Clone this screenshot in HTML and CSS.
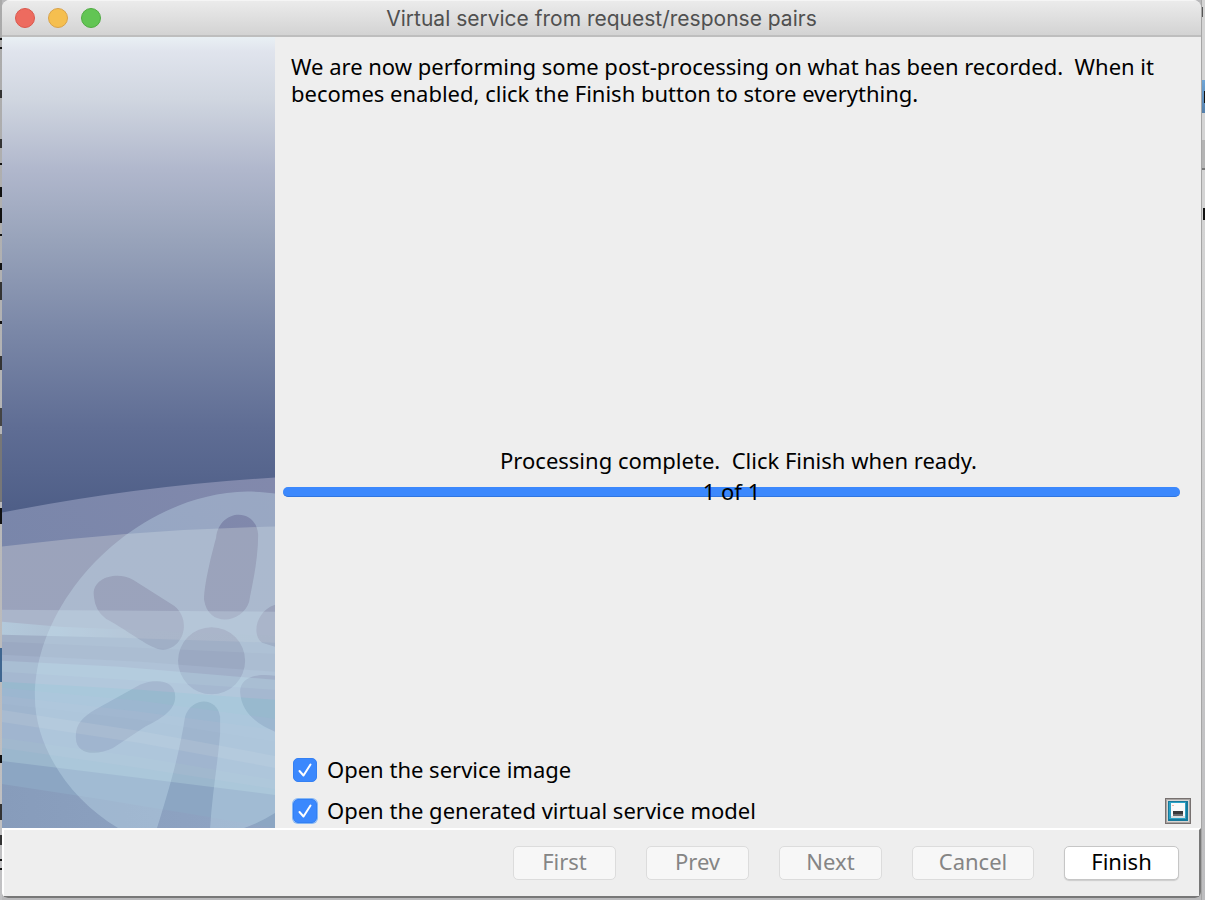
FILE: index.html
```html
<!DOCTYPE html>
<html lang="en">
<head>
    <meta charset="UTF-8">
    <meta name="viewport" content="width=device-width, initial-scale=1.0">
    <title>Virtual service from request/response pairs</title>
    <link rel="stylesheet" href="styles.css">
</head>
<body>
    <div class="edge-left"></div>

    <div class="window">
        <header class="titlebar">
            <div class="lights">
                <button class="light close" aria-label="Close"></button>
                <button class="light minimize" aria-label="Minimize"></button>
                <button class="light maximize" aria-label="Zoom"></button>
            </div>
            <h1>Virtual service from request/response pairs</h1>
        </header>

        <div class="content">
            <!-- Wizard artwork -->
            <aside class="artwork">
                <svg viewBox="2 38 273 790" preserveAspectRatio="xMidYMax slice" aria-hidden="true">
                    <defs>
                        <linearGradient id="sky" gradientUnits="userSpaceOnUse" x1="0" y1="38" x2="0" y2="514">
                            <stop offset="0" stop-color="#e9f0f4"/>
                            <stop offset="0.03" stop-color="#e0e4ed"/>
                            <stop offset="0.13" stop-color="#d0d6e0"/>
                            <stop offset="0.28" stop-color="#b0b7cc"/>
                            <stop offset="0.42" stop-color="#99a4bb"/>
                            <stop offset="0.62" stop-color="#7a87a7"/>
                            <stop offset="0.82" stop-color="#5f6d94"/>
                            <stop offset="1" stop-color="#4e5e87"/>
                        </linearGradient>
                        <linearGradient id="hill" x1="0" y1="1" x2="1" y2="0">
                            <stop offset="0" stop-color="#7384a9"/>
                            <stop offset="1" stop-color="#8289ac"/>
                        </linearGradient>
                        <linearGradient id="field" x1="0" y1="0" x2="0" y2="1">
                            <stop offset="0" stop-color="#9ba3bb"/>
                            <stop offset="1" stop-color="#9aa3be"/>
                        </linearGradient>
                        <linearGradient id="glow" x1="0" y1="0" x2="1" y2="0">
                            <stop offset="0" stop-color="#b3c9db"/>
                            <stop offset="0.5" stop-color="#aab6ca"/>
                            <stop offset="1" stop-color="#a9b5c9"/>
                        </linearGradient>
                        <linearGradient id="deep" x1="0" y1="0" x2="1" y2="0">
                            <stop offset="0" stop-color="#879cbb"/>
                            <stop offset="1" stop-color="#90a5c4"/>
                        </linearGradient>
                    </defs>
                    <rect x="2" y="38" width="273" height="790" fill="url(#sky)"/>
                    <path fill="url(#hill)" d="M2 513Q140 486 275 478V828H2Z"/>
                    <path fill="url(#field)" d="M2 547Q140 530 275 527V828H2Z"/>

                    <!-- Light streaks -->
                    <path fill="#aab5ca" d="M2 610L275 612V828H2Z"/>
                    <path fill="url(#glow)" d="M2 622L60 627L275 636V828H2Z"/>
                    <path fill="#a0afc6" d="M2 635L120 638L275 643V828H2Z"/>
                    <path fill="#9ba9c2" d="M2 642L140 648L275 654V828H2Z"/>
                    <path fill="#a1b0c9" d="M2 655L140 662L275 672V828H2Z"/>
                    <path fill="#a9bed3" d="M2 661L120 667L275 680V828H2Z"/>
                    <path fill="#a5b8d0" d="M2 672L140 681L275 690V828H2Z"/>
                    <path fill="#98b9ce" d="M2 682L140 690L275 700V828H2Z"/>
                    <path fill="#9cb7d0" d="M2 688L140 701L275 719V828H2Z"/>
                    <path fill="#a1b7d0" d="M2 696L140 712L275 730V828H2Z"/>
                    <path fill="#9fb5ce" d="M2 704L140 720L275 742V828H2Z"/>
                    <path fill="#a8bbd1" d="M2 710L140 731L275 756V828H2Z"/>
                    <path fill="#a0b5cf" d="M2 722L140 743L275 768V828H2Z"/>
                    <path fill="#a1b8ce" d="M2 738L140 757L275 780V828H2Z"/>
                    <path fill="#9bb7cd" d="M2 748L140 768L275 789V828H2Z"/>
                    <path fill="#8ca6c3" d="M2 761L140 778L275 795V828H2Z"/>
                    <path fill="url(#deep)" d="M2 784L100 799L275 828H2Z"/>

                    <!-- Translucent disc with cut-out petals -->
                    <path fill="#cceaf5" fill-opacity="0.32" fill-rule="evenodd" d="M118 828C68 798 35 746 35 697C35 597 137 494 247 492C257 492 267 493 275 494V813Q261 822 244 828H210
                        C212 795 218 760 220 733V717C217 696 191 697 185 717C180 750 172 780 157 828Z
                        M216 538C219 509 256 507 258 535C258 560 252 586 249 602C242 624 208 628 204 600C204 585 211 556 216 538Z
                        M94 597C91 578 117 571 133 580L174 606C191 619 185 648 163 650C151 650 130 632 106 619Q95 611 94 597Z
                        M245 661A33 33 0 1 1 178 661A33 33 0 1 1 245 661Z
                        M76 738C75 725 83 717 95 710L140 685C157 677 177 681 175 699C174 711 161 719 145 727L113 748C97 756 76 755 76 738Z
                        M275 605C256 611 251 635 262 643L275 647Z
                        M275 676C257 673 240 677 240 692C241 713 257 724 275 732Z"/>
                </svg>
            </aside>

            <main class="panel">
                <p class="intro">We are now performing some post-processing on what has been recorded.&nbsp; When it becomes enabled, click the Finish button to store everything.</p>

                <div class="status">
                    <label for="progress">Processing complete.&nbsp; Click Finish when ready.</label>
                    <div class="progress-wrap">
                        <progress id="progress" value="1" max="1"></progress>
                        <span class="progress-text">1 of 1</span>
                    </div>
                </div>

                <div class="options">
                    <div class="checks">
                        <label class="check">
                            <span class="box">
                                <input type="checkbox" checked>
                                <svg viewBox="0 0 24 24" aria-hidden="true"><path d="M6.500 13L10.500 17.500L17.500 6.500"/></svg>
                            </span>
                            Open the service image
                        </label>
                        <label class="check">
                            <span class="box focused">
                                <input type="checkbox" checked>
                                <svg viewBox="0 0 24 24" aria-hidden="true"><path d="M6.500 13L10.500 17.500L17.500 6.500"/></svg>
                            </span>
                            Open the generated virtual service model
                        </label>
                    </div>
                    <button class="save" aria-label="Save">
                        <svg viewBox="0 0 26 26" aria-hidden="true">
                            <rect x="0.500" y="0.500" width="25" height="25" fill="#d8d5d3" stroke="#777170"/>
                            <rect x="1.500" y="1.500" width="23" height="23" fill="none" stroke="#aaa5a3"/>
                            <rect x="3" y="3" width="20" height="20" fill="#16799b"/>
                            <rect x="4" y="4" width="17" height="17" fill="#2ba1c5"/>
                            <rect x="6" y="5" width="14" height="15" fill="#f8fafa"/>
                            <path fill="#d9dfe1" d="M6 18H20V20H6Z"/>
                            <path fill="#39393b" d="M8 13H18V18H8Z"/>
                            <path fill="#69696c" d="M8 16H18V18H8Z"/>
                            <path fill="#f0b8a8" d="M7 7H9V8H7Z"/>
                        </svg>
                    </button>
                </div>
            </main>
        </div>

        <footer class="actions">
            <button disabled>First</button>
            <button disabled>Prev</button>
            <button disabled>Next</button>
            <button class="wide" disabled>Cancel</button>
            <button class="finish">Finish</button>
        </footer>
    </div>

    <div class="edge-right"></div>
</body>
</html>
```
FILE: styles.css
```css
* {
    box-sizing: border-box;
}

body {
    display: grid;
    grid-template-columns: 2px 1fr 4px;
    min-height: 100vh;
    margin: 0;
    background-color: #b9b9bb;
    color: #000;
    font-family: "Noto Sans", "Open Sans", sans-serif;
    font-size: 22px;
    line-height: 27px;
}

button,
input {
    margin: 0;
    font: inherit;
}

/* Slivers of the windows behind */
.edge-left {
    background:
        linear-gradient(#111, #111) 0 38px / 2px 2px,
        linear-gradient(#111, #111) 0 47px / 2px 2px,
        linear-gradient(#333, #333) 0 90px / 2px 8px,
        linear-gradient(#333, #333) 0 139px / 2px 9px,
        linear-gradient(#111, #111) 0 163px / 2px 2px,
        linear-gradient(#111, #111) 0 187px / 2px 10px,
        linear-gradient(#111, #111) 0 208px / 2px 15px,
        linear-gradient(#111, #111) 0 234px / 2px 2px,
        linear-gradient(#111, #111) 0 263px / 2px 7px,
        linear-gradient(#333, #333) 0 282px / 2px 18px,
        linear-gradient(#111, #111) 0 321px / 2px 3px,
        linear-gradient(#333, #333) 0 356px / 2px 14px,
        linear-gradient(#444, #444) 0 408px / 2px 18px,
        linear-gradient(#777, #777) 0 434px / 2px 68px,
        linear-gradient(#111, #111) 0 508px / 2px 16px,
        linear-gradient(#3f6690, #3f6690) 0 648px / 2px 34px,
        linear-gradient(#111, #111) 0 755px / 2px 8px,
        linear-gradient(#333, #333) 0 804px / 2px 16px,
        linear-gradient(#333, #333) 0 835px / 2px 10px,
        linear-gradient(#111, #111) 0 859px / 2px 2px,
        linear-gradient(#111, #111) 0 868px / 2px 2px,
        linear-gradient(#aaa, #c2c2c4);
    background-repeat: no-repeat;
}

.edge-right {
    border-left: 1px solid #a5a5a5;
    background:
        linear-gradient(#555, #555) 0 7px / 1px 10px,
        linear-gradient(#111, #111) 2px 91px / 1px 12px,
        linear-gradient(#6fa5d6, #5580ab) 0 80px / 3px 33px,
        linear-gradient(#b4b4b4, #b4b4b4) 0 140px / 3px 28px,
        linear-gradient(#777, #777) 0 168px / 3px 2px,
        linear-gradient(#111, #111) 1px 208px / 2px 12px,
        linear-gradient(#d4d4d4 0, #d4d4d4 224px, #bdbdbf 100%);
    background-repeat: no-repeat;
}

.window {
    display: flex;
    flex-direction: column;
    min-width: 0;
    margin-bottom: 2px;
    background-color: #eee;
    border-radius: 8px 8px 6px 6px;
    overflow: hidden;
}

/* Title bar */
.titlebar {
    display: grid;
    grid-template-columns: 1fr auto 1fr;
    align-items: center;
    height: 37px;
    border-top: 1px solid #f5f5f5;
    border-bottom: 2px solid #bebebe;
    background: linear-gradient(#ebebeb, #d3d3d3);
}

.titlebar h1 {
    margin: 0;
    color: #505050;
    font-family: Inter, sans-serif;
    font-size: 21px;
    font-weight: 400;
}

.lights {
    display: flex;
    gap: 13px;
    padding-left: 13px;
}

.light {
    width: 20px;
    height: 20px;
    padding: 0;
    border: 1px solid;
    border-radius: 50%;
}

.close {
    background-color: #ed6b5f;
    border-color: #d9584d;
}

.minimize {
    background-color: #f5bf4f;
    border-color: #d8a24a;
}

.maximize {
    background-color: #62c554;
    border-color: #50ab42;
}

/* Wizard page */
.content {
    display: flex;
    flex: 1;
}

.artwork {
    position: relative;
    flex: 0 0 273px;
    overflow: hidden;
}

.artwork svg {
    position: absolute;
    width: 100%;
    height: 100%;
}

.panel {
    display: flex;
    flex: 1;
    flex-direction: column;
    justify-content: space-between;
    min-width: 0;
}

.intro {
    margin: 0;
    padding: 16px 24px 0 16px;
}

.status {
    display: flex;
    flex-direction: column;
    gap: 4px;
    padding: 90px 21px 0 8px;
}

.status label {
    padding-left: 14px;
    text-align: center;
}

.progress-wrap {
    position: relative;
    display: flex;
    align-items: center;
    height: 28px;
}

progress {
    appearance: none;
    width: 100%;
    height: 10px;
    border: none;
}

progress::-webkit-progress-bar {
    border-radius: 5px;
    background-color: #ddd;
}

progress::-webkit-progress-value {
    border-bottom: 1px solid #2f75e0;
    border-radius: 5px;
    background-color: #3b88fd;
}

.progress-text {
    position: absolute;
    inset: 0;
    text-align: center;
}

.options {
    display: flex;
    align-items: flex-end;
    justify-content: space-between;
    padding: 0 10px 4px 18px;
}

.checks {
    display: flex;
    flex-direction: column;
    gap: 14px;
}

.check {
    display: flex;
    align-items: center;
    gap: 10px;
}

.box {
    display: grid;
    width: 24px;
    height: 24px;
    border-radius: 5px;
}

.box.focused {
    box-shadow: 0 0 0 1px #85b7f5;
}

.box input,
.box svg {
    grid-area: 1 / 1;
    width: 24px;
    height: 24px;
}

.box input {
    appearance: none;
    border: 1px solid #3480f3;
    border-radius: 5px;
    background-color: #3b88fd;
}

.box svg {
    fill: none;
    stroke: #fff;
    stroke-width: 2;
    stroke-linecap: round;
    stroke-linejoin: round;
    pointer-events: none;
}

.save {
    width: 26px;
    height: 26px;
    padding: 0;
    border: none;
    background: none;
}

.save svg {
    display: block;
}

/* Button bar */
.actions {
    display: flex;
    justify-content: flex-end;
    gap: 30px;
    padding: 16px 20px;
    border-top: 2px solid #fff;
    border-right: 2px solid #777;
    border-bottom: 2px solid #777;
    border-left: 2px solid #fff;
}

.actions button {
    width: 103px;
    height: 34px;
    padding: 0 0 4px;
    border: 1px solid #dcdcdc;
    border-radius: 5px;
    background-color: #f7f7f7;
    color: #858585;
    line-height: 28px;
}

.actions .wide {
    width: 122px;
}

.actions .finish {
    width: 115px;
    border-color: #c6c6c6;
    background-color: #fff;
    box-shadow: 0 1px 1px #ccc;
    color: #000;
}
```
